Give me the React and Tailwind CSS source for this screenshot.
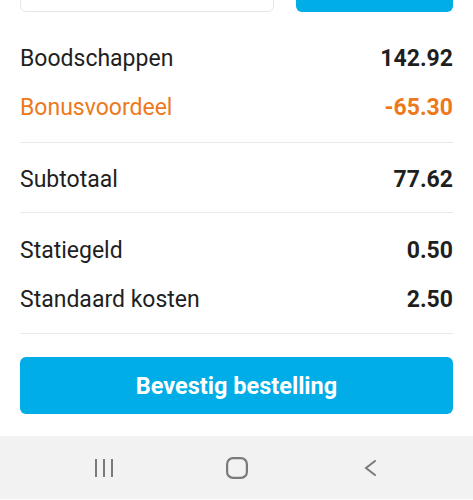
const rowText = "text-[23px] leading-none";

function Row({ label, value, orange }) {
  return (
    <div className={`flex h-[49px] items-center justify-between pt-[3px] ${orange ? "text-[#ec7a1c]" : "text-[#1f1f1f]"}`}>
      <span className={rowText}>{label}</span>
      <span className={`${rowText} font-bold`}>{value}</span>
    </div>
  );
}

function NavBar() {
  return (
    <div className="grid h-[63px] grid-cols-3 items-center bg-[#f2f2f2] px-[37px] text-[#7a7a7a]">
      <div className="flex justify-center">
        <svg width="20" height="20" viewBox="0 0 20 20" fill="none" stroke="currentColor" strokeWidth="2">
          <path d="M2 1v18M10 1v18M18 1v18" />
        </svg>
      </div>
      <div className="flex justify-center">
        <svg width="22" height="22" viewBox="0 0 22 22" fill="none" stroke="currentColor" strokeWidth="2.2">
          <rect x="1.1" y="1.1" width="19.8" height="19.8" rx="6" />
        </svg>
      </div>
      <div className="flex justify-center">
        <svg width="14" height="16" viewBox="0 0 14 16" fill="none" stroke="currentColor" strokeWidth="2" strokeLinecap="round">
          <path d="M12 1L3 8l9 7" />
        </svg>
      </div>
    </div>
  );
}

export default function App() {
  return (
    <div className="h-[500px] w-[473px] overflow-hidden bg-white font-['Roboto',sans-serif]">
      {/* top input + button, cut off by the viewport */}
      <div className="flex h-[12px] items-end gap-[22px] overflow-hidden px-[20px]">
        <div className="h-[48px] w-[254px] shrink-0 rounded-[6px] border border-[#e6e6e6] bg-white" />
        <div className="h-[48px] flex-1 rounded-[6px] bg-[#00ade6]" />
      </div>

      <div className="px-[20px]">
        <div className="pt-[20px] pb-[12px]">
          <Row label="Boodschappen" value="142.92" />
          <Row label="Bonusvoordeel" value="-65.30" orange />
        </div>
        <div className="h-px bg-[#e9e9e9]" />
        <div className="py-[10px]">
          <Row label="Subtotaal" value="77.62" />
        </div>
        <div className="h-px bg-[#e9e9e9]" />
        <div className="py-[11px]">
          <Row label="Statiegeld" value="0.50" />
          <Row label="Standaard kosten" value="2.50" />
        </div>
        <div className="h-px bg-[#e9e9e9]" />
      </div>

      <div className="px-[20px] pt-[23px] pb-[22px]">
        <button className="flex h-[57px] w-full items-center justify-center rounded-[6px] bg-[#00ade6] pt-[2px] text-[23.5px] font-bold text-white">
          Bevestig bestelling
        </button>
      </div>

      <NavBar />
    </div>
  );
}
